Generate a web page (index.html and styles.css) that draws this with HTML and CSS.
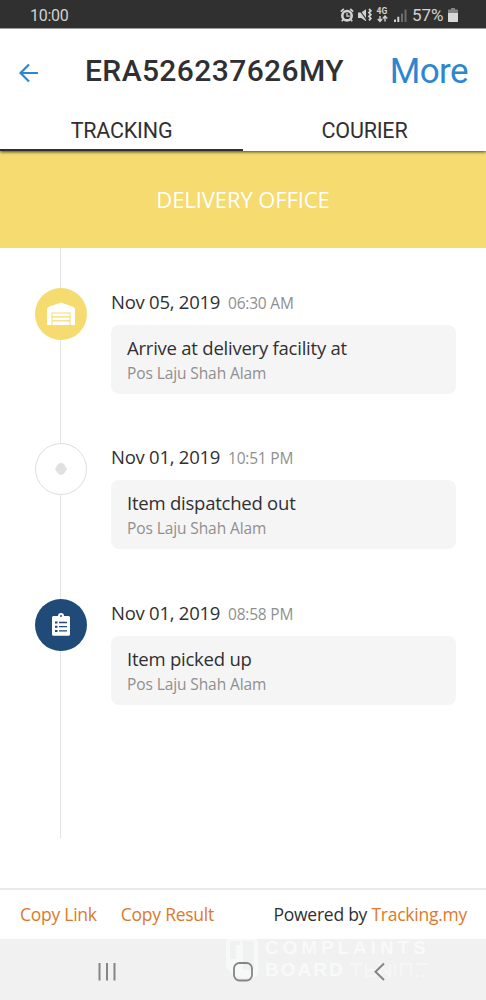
FILE: index.html
```html
<!DOCTYPE html>
<html lang="en">
<head>
<meta charset="utf-8">
<title>Tracking</title>
<link rel="stylesheet" href="styles.css">
</head>
<body>
<div class="phone">
  <div class="status">
    <span class="clock">10:00</span>
    <svg class="status-icons" width="70" height="20" viewBox="0 0 70 20" fill="#d2d2d2">
      <circle cx="7" cy="10.7" r="4.7" fill="none" stroke="#d2d2d2" stroke-width="2.6"/>
      <path d="M7 8v3.2h2.8" fill="none" stroke="#d2d2d2" stroke-width="1.3"/>
      <path d="M.8 6.6L3.8 4M13.2 6.6L10.2 4M3.2 14.5L1.8 16.3M10.8 14.5L12.2 16.3" stroke="#d2d2d2" stroke-width="1.7"/>
      <path d="M18 7.5h3.2L26 4.2v12L21.2 13H18z" />
      <path d="M29 4l1.8 1.8L29 7.6l1.8 2L29 11.4l1.8 2-1.8 2" fill="none" stroke="#d2d2d2" stroke-width="1.8"/>
      <path d="M18.500 3.500l8.500 12" stroke="#303030" stroke-width="1.2"/>
      <text class="net" x="36.500" y="8.6">4G</text>
      <path d="M40 11v5M37.8 14l2.2 2.4 2.2-2.4M45 16.5v-5M42.8 13.5L45 11.1l2.2 2.4" fill="none" stroke="#d2d2d2" stroke-width="1.4"/>
      <path d="M54 14.5h2V17h-2zM57.3 11.7h2V17h-2z"/>
      <path d="M61 8.5h2V17h-2zM64.5 4.5h2V17h-2z" fill="#6c6c6c"/>
    </svg>
    <span class="percent">57%</span>
    <svg class="battery" width="10" height="14" viewBox="0 0 10 14"><path d="M3 0h4v1.4h2.3q.7 0 .7.7V5H0V2.1q0-.7.7-.7H3z" fill="#858585"/><path d="M0 5h10v8.3q0 .7-.7.7H.7Q0 14 0 13.300z" fill="#d8d8d8"/></svg>
  </div>
  <header class="header">
    <svg class="back" width="20" height="20" viewBox="0 0 20 20" fill="none" stroke="#2e86d0" stroke-width="2.2"><path d="M19 10H2M10 1.500L1.500 10l8.500 8.500"/></svg>
    <h1 class="title">ERA526237626MY</h1>
    <span class="more">More</span>
  </header>
  <nav class="tabs">
    <span class="tab tab-active">TRACKING</span>
    <span class="tab">COURIER</span>
  </nav>
  <div class="banner">DELIVERY OFFICE</div>
  <main class="timeline">
    <section class="event">
      <div class="rail"><div class="dot dot-yellow">
        <svg width="28" height="24" viewBox="0 0 28 24"><path d="M0 23V7.500Q0 5.500 2 4.700L14 .500l12 4.200q2 .8 2 2.800V23h-4.500V10.500h-19V23z" fill="#fff"/><path d="M5.500 11.500h17v2.800h-17zM5.500 15.500h17v2.800h-17zM5.500 19.500h17V23h-17z" fill="#fff"/></svg>
      </div></div>
      <div class="info">
        <div class="when"><span class="date">Nov 05, 2019</span><span class="time">06:30 AM</span></div>
        <div class="card"><div class="what">Arrive at delivery facility at</div><div class="where">Pos Laju Shah Alam</div></div>
      </div>
    </section>
    <section class="event">
      <div class="rail"><div class="dot dot-empty">
        <svg width="12" height="12" viewBox="0 0 12 12"><path d="M3.500 1L6 .500 8.500 1l3 5-3 4.500L6 11.500l-2.500-1L.5 6z" fill="#e0e0e0" stroke="#e0e0e0" stroke-linejoin="round"/></svg>
      </div></div>
      <div class="info">
        <div class="when"><span class="date">Nov 01, 2019</span><span class="time">10:51 PM</span></div>
        <div class="card"><div class="what">Item dispatched out</div><div class="where">Pos Laju Shah Alam</div></div>
      </div>
    </section>
    <section class="event">
      <div class="rail"><div class="dot dot-blue">
        <svg width="18" height="23" viewBox="0 0 18 23"><path d="M1.500 3H6a3 3 0 0 1 6 0h4.500Q18 3 18 4.500v16.800q0 1.500-1.500 1.500h-15Q0 22.800 0 21.300V4.500Q0 3 1.500 3z" fill="#fff"/><circle cx="9" cy="3" r="1" fill="#204a78"/><path d="M3 9.500h2.500M3 13.700h2.500M3 17.900h2.500" stroke="#204a78" stroke-width="2"/><path d="M7 9.500h8M7 13.700h8M7 17.900h8" stroke="#204a78" stroke-width="1.300"/></svg>
      </div></div>
      <div class="info">
        <div class="when"><span class="date">Nov 01, 2019</span><span class="time">08:58 PM</span></div>
        <div class="card"><div class="what">Item picked up</div><div class="where">Pos Laju Shah Alam</div></div>
      </div>
    </section>
  </main>
  <footer class="footer">
    <span class="link">Copy Link</span>
    <span class="link result">Copy Result</span>
    <span class="powered">Powered by <span class="link">Tracking.my</span></span>
  </footer>
  <div class="navbar">
    <div class="watermark">
      <svg width="32" height="39" viewBox="0 0 32 39"><path d="M4 0h24q4 0 4 4v28q0 7-8 7h-9Q7 36 0 28V4q0-4 4-4z" fill="#f7f8f8"/><path d="M4 20V5q0-3 3-3h7v4h-4v14zM17 2h8q3 0 3 3v23q0 3-3 3h-8z" fill="#f1f1f1"/></svg>
      <div class="mark-text"><div class="mark-one">COMPLAINTS</div><div class="mark-two"><span>BOARD</span><svg width="82" height="16" viewBox="0 0 82 16" fill="none" stroke="#f5f6f6" stroke-width="2"><path d="M2 2h12M8 2v12M18 2v12h10M18 8h8M32 14V2l10 12V2M47 2v12M53 14V2h10v12M68 2h12M68 14h3M74 14h3"/></svg></div></div>
    </div>
    <svg class="keys" width="486" height="61" viewBox="0 0 486 61" fill="none" stroke="#858585" stroke-width="2">
      <path d="M99.500 24v17.500M107 24v17.500M114.500 24v17.500"/>
      <rect x="234" y="24" width="18" height="17.500" rx="5.500" stroke-width="1.800"/>
      <path d="M384 24.500l-8.500 8.200 8.500 8.300"/>
    </svg>
  </div>
</div>
</body>
</html>
```
FILE: styles.css
```css
* { box-sizing: border-box; }
body { margin: 0; background: #fff; font-family: "Open Sans", "Noto Sans", sans-serif; color: #303032; }
.phone { width: 486px; height: 1000px; display: flex; flex-direction: column; overflow: hidden; }
.status { height: 29px; flex: none; background: #303030; border-bottom: 1px solid #9a9a9a; color: #d2d2d2; display: flex; align-items: center; padding: 2px 28px 0 30px; font-family: Roboto, sans-serif; }
.clock { font-size: 16px; letter-spacing: -0.3px; flex: 1; }
.status-icons { margin-right: 2px; }
.net { font: bold 8.500px Roboto, sans-serif; }
.percent { font-size: 17px; width: 33px; margin-right: 3px; }
.header { height: 78px; flex: none; display: flex; align-items: center; padding: 5px 18px 0 19px; font-family: Roboto, sans-serif; }
.back { margin-top: 4px; }
.title { flex: 1; margin: 0 0 0 46px; font-size: 30px; font-weight: 500; letter-spacing: 0.4px; line-height: 40px; white-space: nowrap; }
.more { font-size: 35px; letter-spacing: -0.6px; line-height: 40px; padding-top: 2px; color: #2e86d0; }
.tabs { height: 44px; flex: none; display: flex; font-family: Roboto, sans-serif; font-size: 21.500px; letter-spacing: -0.2px; position: relative; box-shadow: 0 1px 3px rgba(0,0,0,.7); clip-path: inset(0 0 -6px 0); z-index: 1; background: #fff; }
.tab { flex: 1; display: flex; align-items: center; justify-content: center; padding-top: 4px; border-bottom: 2px solid transparent; }
.tab-active { border-color: #303032; }
.banner { height: 97px; flex: none; background: #f5db70; color: #fff; display: flex; align-items: center; justify-content: center; font-size: 22px; letter-spacing: -0.1px; padding-bottom: 2px; }
.timeline { height: 640px; flex: none; padding: 40px 30px 0 35px; background: linear-gradient(#e4e4e4, #e4e4e4) 60px 0 / 1px 590px no-repeat; }
.event { display: flex; height: 155.400px; }
.rail { width: 76px; flex: none; }
.dot { width: 52px; height: 52px; border-radius: 50%; display: flex; align-items: center; justify-content: center; }
.dot-yellow { background: #f5db70; }
.dot-empty { background: #fff; border: 1px solid #dedede; }
.dot-blue { background: #204a78; }
.info { flex: 1; }
.when { height: 37px; display: flex; align-items: baseline; line-height: 28px; }
.date { font-size: 18.500px; letter-spacing: -0.250px; width: 117px; white-space: nowrap; }
.time { font-size: 15.500px; letter-spacing: -0.200px; color: #8f8f8f; }
.card { height: 69px; border-radius: 8px; background: #f5f5f5; padding: 10px 16px; white-space: nowrap; }
.what { font-size: 18.500px; letter-spacing: -0.230px; line-height: 25px; }
.where { font-size: 15.500px; letter-spacing: -0.100px; line-height: 23px; padding-top: 2px; color: #8f8f8f; }
.footer { height: 51px; flex: none; border-top: 2px solid #e9e9e9; display: flex; align-items: center; padding: 0 19px 2px 20px; font-size: 17.500px; letter-spacing: -0.250px; white-space: nowrap; }
.link { color: #dd792b; }
.result { margin-left: 24px; }
.powered { margin-left: auto; }
.navbar { height: 61px; flex: none; background: #f1f1f1; position: relative; }
.watermark { display: flex; gap: 7px; padding-left: 226px; }
.mark-text { color: #f8f9f9; font-family: "Liberation Sans", sans-serif; font-weight: 700; font-size: 19px; line-height: 18px; }
.mark-one { letter-spacing: 3.900px; height: 23px; }
.mark-two { display: flex; align-items: center; gap: 3px; letter-spacing: 2px; line-height: 16px; }
.keys { position: absolute; left: 0; top: 0; }
```
